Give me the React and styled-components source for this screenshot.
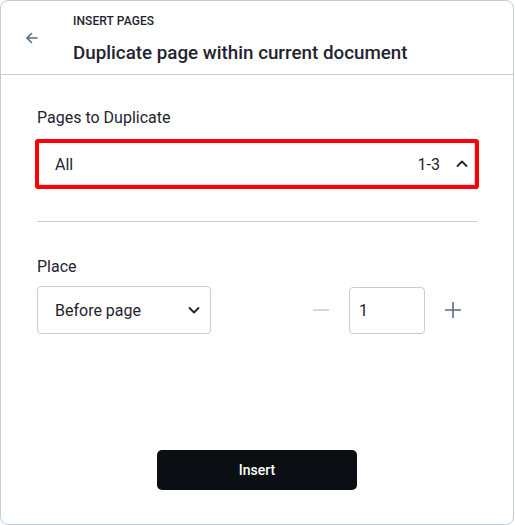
import React from 'react';
import styled, { createGlobalStyle } from 'styled-components';

const GlobalStyle = createGlobalStyle`
    html, body {
        margin: 0;
        padding: 0;
        background: #ffffff;
    }
    body {
        font-family: Roboto, "Liberation Sans", sans-serif;
        color: #1f2430;
    }
`;

const Panel = styled.div`
    box-sizing: border-box;
    width: 514px;
    height: 525px;
    border: 1px solid #c3cddc;
    border-radius: 8px;
    background: #fff;
    display: flex;
    flex-direction: column;
`;

const Header = styled.div`
    display: flex;
    align-items: flex-start;
    height: 73px;
    border-bottom: 1px solid #c3cddc;
`;

const BackButton = styled.button`
    width: 24px;
    height: 24px;
    margin: 25px 0 0 19px;
    padding: 0;
    border: none;
    background: none;
    display: flex;
    align-items: center;
    justify-content: center;
    color: #5b6a84;
    cursor: pointer;
`;

const Titles = styled.div`
    display: flex;
    flex-direction: column;
    margin-left: 29px;
    padding-top: 13px;
`;

const Eyebrow = styled.span`
    font-size: 12px;
    font-weight: 500;
    letter-spacing: 0.1px;
    line-height: 14px;
    color: #1f2430;
`;

const Title = styled.h1`
    margin: 14px 0 0;
    font-size: 18.8px;
    font-weight: 500;
    line-height: 23px;
    color: #1f2430;
`;

const Body = styled.div`
    flex: 1;
    display: flex;
    flex-direction: column;
    padding: 33px 36px 34px;
`;

const Label = styled.div`
    font-size: 16px;
    font-weight: 400;
    line-height: 19px;
    color: #1f2430;
    margin-bottom: ${p => p.gap || 11}px;
`;

const RangeSelect = styled.div`
    box-sizing: border-box;
    height: 50px;
    margin: 0 -2px;
    border: 4px solid #ff0000;
    border-radius: 3px;
    display: flex;
    align-items: center;
    padding: 0 6px 0 16px;
    font-size: 16px;
    color: #1f2430;
    box-shadow: inset -1px -1px 0 #d6dbe3;
`;

const Grow = styled.span`
    flex: 1;
`;

const Range = styled.span`
    margin-right: 15px;
`;

const Divider = styled.hr`
    border: none;
    border-top: 1px solid #c3cddc;
    margin: 32px 0 35px;
`;

const PlaceRow = styled.div`
    display: flex;
    align-items: center;
`;

const Dropdown = styled.div`
    box-sizing: border-box;
    width: 174px;
    height: 48px;
    border: 1px solid #c3cddc;
    border-radius: 4px;
    display: flex;
    align-items: center;
    padding: 0 9px 0 17px;
    font-size: 16px;
    color: #1f2430;
`;

const Stepper = styled.div`
    margin-left: auto;
    margin-right: 12px;
    display: flex;
    align-items: center;
    gap: 16px;
`;

const StepButton = styled.button`
    width: 24px;
    height: 24px;
    padding: 0;
    border: none;
    background: none;
    display: flex;
    align-items: center;
    justify-content: center;
    color: ${p => (p.disabled ? '#c9d0db' : '#5b6a84')};
`;

const NumberBox = styled.div`
    box-sizing: border-box;
    width: 76px;
    height: 47px;
    border: 1px solid #c3cddc;
    border-radius: 4px;
    display: flex;
    align-items: center;
    padding-left: 9px;
    font-size: 16px;
    color: #1f2430;
`;

const Footer = styled.div`
    margin-top: auto;
    display: flex;
    justify-content: center;
`;

const InsertButton = styled.button`
    width: 200px;
    height: 40px;
    border: none;
    border-radius: 5px;
    background: #0b0e13;
    color: #fff;
    font-family: Roboto, "Liberation Sans", sans-serif;
    font-size: 14px;
    font-weight: 500;
    cursor: pointer;
`;

const Chevron = ({ up }) => (
    <svg width="14" height="14" viewBox="0 0 14 14" fill="none" stroke="#1f2430" strokeWidth="1.8" strokeLinecap="round" strokeLinejoin="round">
        {up ? <path d="M2.5 9 L7 4.5 L11.5 9" /> : <path d="M2.5 5 L7 9.5 L11.5 5" />}
    </svg>
);

export default function App() {
    return (
        <>
            <GlobalStyle />
            <Panel>
                <Header>
                    <BackButton aria-label="Back">
                        <svg width="16" height="16" viewBox="0 0 16 16" fill="none" stroke="currentColor" strokeWidth="1.6" strokeLinecap="round" strokeLinejoin="round">
                            <path d="M13 8 H3" />
                            <path d="M7.5 3.5 L3 8 L7.5 12.5" />
                        </svg>
                    </BackButton>
                    <Titles>
                        <Eyebrow>INSERT PAGES</Eyebrow>
                        <Title>Duplicate page within current document</Title>
                    </Titles>
                </Header>
                <Body>
                    <Label gap={12}>Pages to Duplicate</Label>
                    <RangeSelect>
                        <Grow>All</Grow>
                        <Range>1-3</Range>
                        <Chevron up />
                    </RangeSelect>
                    <Divider />
                    <Label gap={10}>Place</Label>
                    <PlaceRow>
                        <Dropdown>
                            <Grow>Before page</Grow>
                            <Chevron />
                        </Dropdown>
                        <Stepper>
                            <StepButton disabled aria-label="Decrease">
                                <svg width="18" height="18" viewBox="0 0 18 18" stroke="currentColor" strokeWidth="1.6">
                                    <path d="M1 9 H17" />
                                </svg>
                            </StepButton>
                            <NumberBox>1</NumberBox>
                            <StepButton aria-label="Increase">
                                <svg width="18" height="18" viewBox="0 0 18 18" stroke="currentColor" strokeWidth="1.6">
                                    <path d="M1 9 H17 M9 1 V17" />
                                </svg>
                            </StepButton>
                        </Stepper>
                    </PlaceRow>
                    <Footer>
                        <InsertButton>Insert</InsertButton>
                    </Footer>
                </Body>
            </Panel>
        </>
    );
}
